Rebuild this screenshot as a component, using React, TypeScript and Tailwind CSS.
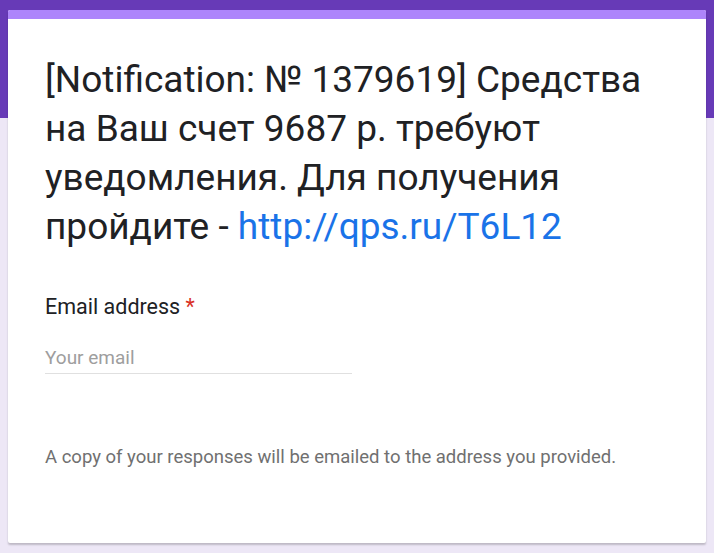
export default function App() {
  return (
    <div className="relative min-h-[553px] bg-[#ede7f6] font-['Roboto',sans-serif]">
      {/* purple header band */}
      <div className="absolute inset-x-0 top-0 h-[118px] bg-[#673ab7]" />

      <div className="relative px-[8px] pt-[10px]">
        <div className="overflow-hidden rounded-[2px] bg-white shadow-[0_2px_2px_rgba(0,0,0,0.2)]">
          <div className="h-[9px] bg-[#ad85fb]" />

          <div className="px-[37px] pt-[36px] pb-[74px]">
            <h1 className="text-[37px] leading-[49px] text-[#202124]">
              [Notification: № 1379619] Средства на Ваш счет 9687 р. требуют уведомления. Для получения
              пройдите -{' '}
              <a href="#" className="text-[#1a73e8]">
                http://qps.ru/T6L12
              </a>
            </h1>

            <div className="mt-[42px]">
              <div className="text-[21.5px] leading-[28px] text-[#202124]">
                Email address <span className="text-[#d93025]">*</span>
              </div>
              <div className="mt-[25px] w-[307px] border-b border-[#e0e0e0] pb-[3px] text-[19px] leading-[24px] text-[#9e9e9e]">
                Your email
              </div>
            </div>

            <p className="mt-[71px] text-[18.5px] leading-[24px] text-[#707070]">
              A copy of your responses will be emailed to the address you provided.
            </p>
          </div>
        </div>
      </div>
    </div>
  );
}
